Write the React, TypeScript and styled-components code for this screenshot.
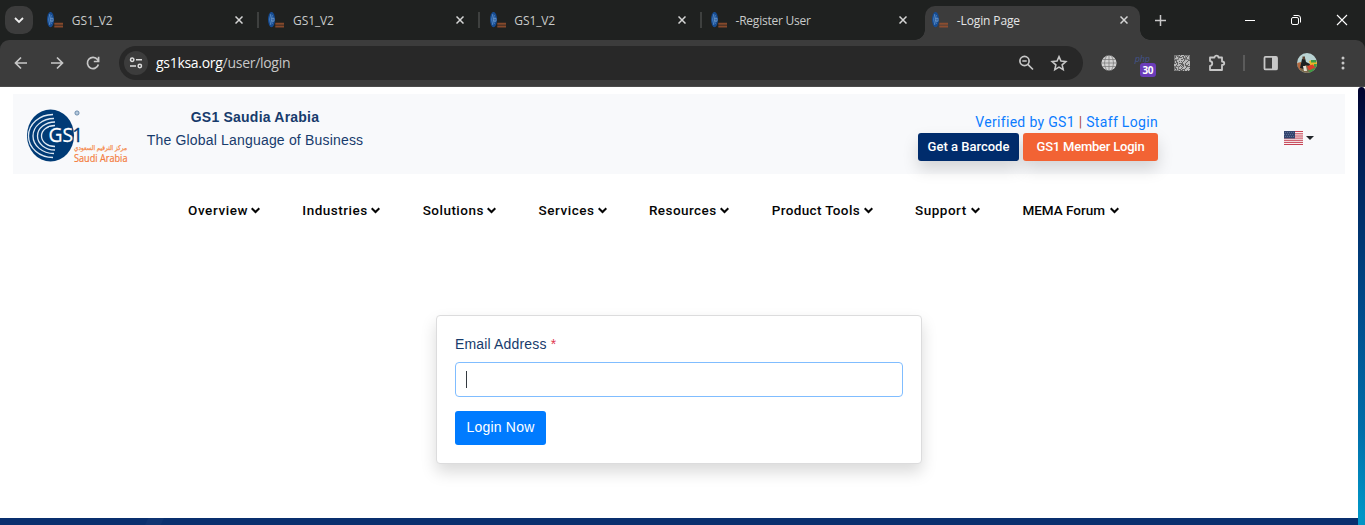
import React from "react";
import styled, { createGlobalStyle } from "styled-components";

const Global = createGlobalStyle`
  * { box-sizing: border-box; }
  html, body { margin: 0; padding: 0; overflow: hidden; background: #fff; }
  body { font-family: "Liberation Sans", Arial, sans-serif; }
  svg { display: block; flex: none; }
`;

const Screen = styled.div`
  width: 1365px;
  height: 525px;
  display: flex;
  flex-direction: column;
  overflow: hidden;
`;

const TabStrip = styled.div`
  height: 40px;
  flex: none;
  display: flex;
  background: #1f2120;
  padding: 6px 0 0 5px;
  font-family: "Open Sans", "Noto Sans", sans-serif;
`;

const TabSearch = styled.div`
  width: 28px;
  height: 28px;
  border-radius: 10px;
  background: #3c3c3c;
  display: flex;
  align-items: center;
  justify-content: center;
  margin-right: 7px;
`;

const Tab = styled.div<{ $active?: boolean }>`
  position: relative;
  width: 215px;
  height: 34px;
  margin-right: 6.25px;
  padding: 0 12px 6px 7px;
  display: flex;
  align-items: center;
  border-radius: 10px 10px 0 0;
  background: ${(p) => (p.$active ? "#3c3c3c" : "transparent")};
  color: ${(p) => (p.$active ? "#e6e6e6" : "#c9cbca")};
  &::before, &::after {
    content: "";
    display: ${(p) => (p.$active ? "block" : "none")};
    position: absolute;
    bottom: 0;
    width: 10px;
    height: 10px;
  }
  &::before {
    left: -10px;
    background: radial-gradient(circle at 0 0, transparent 9.5px, #3c3c3c 10px);
  }
  &::after {
    right: -10px;
    background: radial-gradient(circle at 100% 0, transparent 9.5px, #3c3c3c 10px);
  }
`;

const TabTitle = styled.span<{ $spacing: number }>`
  flex: 1;
  margin-left: 8.8px;
  padding-top: 1px;
  font-size: 12px;
  line-height: 16px;
  letter-spacing: ${(p) => p.$spacing}px;
  white-space: nowrap;
`;

const TabDivider = styled.span`
  position: absolute;
  right: -4px;
  top: 6px;
  width: 2px;
  height: 16px;
  background: #3e403f;
`;

const NewTab = styled.div`
  width: 28px;
  height: 28px;
  display: flex;
  align-items: center;
  justify-content: center;
`;

const WindowControls = styled.div`
  flex: 1;
  height: 28px;
  display: flex;
  justify-content: flex-end;
  align-items: center;
  gap: 34px;
  padding-right: 17px;
`;

const ToolbarBack = styled.div`
  height: 47px;
  flex: none;
  background: #1f2120;
`;

const Toolbar = styled.div`
  height: 47px;
  display: flex;
  align-items: center;
  padding: 0 14px 1px 13px;
  background: #3c3c3c;
  border-radius: 9px 9px 0 0;
  border-bottom: 1px solid #4b4b4b;
`;

const NavButtons = styled.div`
  display: flex;
  gap: 20px;
  width: 106px;
`;

const AddressBar = styled.div`
  width: 964px;
  height: 34px;
  border-radius: 17px;
  background: #282828;
  display: flex;
  align-items: center;
  padding: 0 15px 0 5px;
`;

const SiteInfo = styled.div`
  width: 24px;
  height: 24px;
  border-radius: 50%;
  background: #3c3c3c;
  display: flex;
  align-items: center;
  justify-content: center;
`;

const Url = styled.div`
  flex: 1;
  margin-left: 8px;
  padding-top: 1px;
  font: 14px/20px "Open Sans", "Noto Sans", sans-serif;
  letter-spacing: -0.29px;
  color: #c7c7c7;
  b { font-weight: 400; color: #fff; }
`;

const BarIcons = styled.div`
  display: flex;
  align-items: center;
  gap: 16px;
`;

const Extensions = styled.div`
  flex: 1;
  display: flex;
  align-items: center;
  justify-content: space-between;
  margin-left: 18px;
`;

const PhpIcon = styled.div`
  display: flex;
  flex-direction: column;
  width: 21px;
  height: 28px;
  padding-top: 5px;
  font: italic 9px/9px "Open Sans", sans-serif;
  letter-spacing: -0.3px;
  color: #43548c;
`;

const Count = styled.span`
  position: relative;
  align-self: flex-end;
  flex: none;
  width: 16px;
  height: 14px;
  border-radius: 3px;
  background: #6b3cba;
  color: #fff;
  font: 700 10px/14px "Open Sans", sans-serif;
  text-align: center;
`;

const ToolDivider = styled.span`
  width: 2px;
  height: 16px;
  background: #5b5b5b;
`;

const Page = styled.div`
  flex: 1;
  min-height: 0;
  display: flex;
  background: #fff;
`;

const Main = styled.main`
  width: 1358px;
  display: flex;
  flex-direction: column;
  align-items: center;
`;

const ScrollThumb = styled.div`
  width: 7px;
  border-radius: 4px 4px 0 0;
  background: linear-gradient(100deg, transparent 50%, rgba(0, 30, 80, 0.15)),
    linear-gradient(180deg, #02022e 0%, #00194f 12%, #004a8a 50%, #0074b0 78%, #00a8d8 98%);
`;

const Header = styled.header`
  align-self: flex-start;
  width: 1332px;
  height: 80px;
  margin: 7px 0 0 13px;
  padding-left: 13px;
  display: flex;
  align-items: flex-start;
  background: #f8f9fb;
`;

const Tagline = styled.div`
  width: 218px;
  margin: 12px 0 0 16px;
  text-align: center;
  color: #173b6c;
  font-size: 14px;
  line-height: 23px;
  white-space: nowrap;
  strong { display: block; letter-spacing: 0.22px; }
  span { letter-spacing: 0.18px; }
`;

const Actions = styled.div`
  width: 240px;
  margin: 18px 0 0 554px;
`;

const Links = styled.div`
  height: 21px;
  text-align: right;
  font: 14px/21px Roboto, sans-serif;
  letter-spacing: 0.32px;
  white-space: nowrap;
  color: #a84a4a;
  a { color: #0b7cff; }
`;

const ButtonRow = styled.div`
  display: flex;
  gap: 4px;
`;

const HeaderButton = styled.button<{ $color: string; $width: number; $spacing: number }>`
  width: ${(p) => p.$width}px;
  height: 28px;
  padding: 0;
  border: 0;
  border-radius: 3px;
  background: ${(p) => p.$color};
  color: #fff;
  font: 500 13px/28px Roboto, sans-serif;
  letter-spacing: ${(p) => p.$spacing}px;
  box-shadow: 0 8px 16px rgba(0, 0, 0, 0.15);
  white-space: nowrap;
`;

const Language = styled.div`
  display: flex;
  align-items: center;
  gap: 3px;
  margin: 37px 0 0 126px;
`;

const Caret = styled.span`
  border: 4px solid transparent;
  border-top-color: #212529;
  border-bottom: 0;
`;

const Menu = styled.nav`
  align-self: flex-start;
  display: flex;
  gap: 42.35px;
  margin: 26px 0 0 188px;
  height: 20px;
`;

const MenuItem = styled.a<{ $width: number; $spacing: number }>`
  width: ${(p) => p.$width}px;
  display: flex;
  align-items: center;
  justify-content: space-between;
  color: #050505;
  font: 500 13.5px/20px Roboto, sans-serif;
  letter-spacing: ${(p) => p.$spacing}px;
  white-space: nowrap;
`;

const Card = styled.form`
  width: 486px;
  height: 149px;
  margin-top: 95px;
  padding: 18px;
  border: 1px solid #dcdcdd;
  border-radius: 4px;
  background: #fff;
  box-shadow: 0 8px 16px rgba(0, 0, 0, 0.15);
`;

const Label = styled.label`
  display: block;
  height: 28px;
  font-size: 14px;
  line-height: 21px;
  letter-spacing: 0.16px;
  color: #173b6c;
  em { font-style: normal; color: #e03550; }
`;

const Field = styled.div`
  height: 35px;
  border: 1px solid #80bdff;
  border-radius: 4px;
  padding: 8px 10px;
`;

const TextCursor = styled.span`
  display: block;
  width: 1px;
  height: 17px;
  background: #343a40;
`;

const LoginButton = styled.button`
  display: block;
  width: 91px;
  height: 34px;
  margin-top: 14px;
  padding: 0 0 2px;
  border: 0;
  border-radius: 3px;
  background: #007bff;
  color: #fff;
  font: 14px/21px "Liberation Sans", Arial, sans-serif;
  letter-spacing: 0.2px;
`;

const Footer = styled.footer`
  width: 100%;
  height: 7px;
  margin-top: auto;
  background: linear-gradient(115deg, transparent 134px, #0f3472 135px, #0f3472 148px, transparent 149px), #092f6e;
`;

const Favicon = () => (
  <svg width="16" height="16" viewBox="0 0 16 16">
    <ellipse cx="3.5" cy="7.6" rx="3.5" ry="7.7" fill="#164b91" />
    <path d="M2.8 2Q.5 7.5 2.8 13M4.3 3Q2 7.5 4.3 12" stroke="#5d91c9" strokeWidth=".8" fill="none" />
    <path d="M4 6.2h2v3H4z" stroke="#98b9df" strokeWidth=".6" fill="none" />
    <path d="M7.3 11.8H16M7.3 14.5H16" stroke="#99512e" strokeWidth="1.9" opacity=".85" />
  </svg>
);

const Close = () => (
  <svg width="8" height="8" viewBox="0 0 8 8" stroke="#d5d5d5" strokeWidth="1.5">
    <path d="M.5.5l7 7M7.5.5l-7 7" />
  </svg>
);

const Arrow = ({ flip }: { flip?: boolean }) => (
  <svg width="16" height="16" viewBox="0 0 16 16" fill="none" stroke="#c7c7c7" strokeWidth="1.7">
    <path d={flip ? "M2 8h11.2M8 2.5L13.5 8 8 13.5" : "M14 8H2.8M8 2.5L2.5 8 8 13.5"} />
  </svg>
);

const Logo = () => (
  <svg width="104" height="80" viewBox="0 0 104 80" style={{ overflow: "visible" }}>
    <ellipse cx="24.5" cy="41.5" rx="23.5" ry="26" fill="#003b76" />
    <g fill="none" stroke="#dfe9f3" strokeWidth="1.3">
      <path d="M27 20.500A24.500 21.500 0 0 0 27 63.500" />
      <path d="M28 24.500A21 17.500 0 0 0 28 59.500" />
      <path d="M29 28A17.500 14 0 0 0 29 56" />
      <path d="M29 31.500A13.500 10.500 0 0 0 29 52.500" />
    </g>
    <path d="M23 33h23v16H23z" fill="#003b76" />
    <text x="22.5" y="48.3" fontFamily="Open Sans, sans-serif" fontSize="19.5" fill="#fff" textLength="24.5" lengthAdjust="spacingAndGlyphs" stroke="#fff" strokeWidth=".3">GS</text>
    <text x="46" y="48.3" fontFamily="Open Sans, sans-serif" fontSize="19.5" fill="#003b76" stroke="#003b76" strokeWidth=".3">1</text>
    <circle cx="51" cy="19" r="2.1" fill="#b6c9db" stroke="#5379a0" strokeWidth=".8" />
    <text x="101" y="56" direction="rtl" fontFamily="DejaVu Sans, sans-serif" fontSize="6.5" fill="#f58a4d" stroke="#f58a4d" strokeWidth=".25" textLength="53" lengthAdjust="spacingAndGlyphs">مركز الترقيم السعودي</text>
    <text x="48" y="68" fontFamily="Open Sans, sans-serif" fontSize="10" fill="#f47c3c" stroke="#f47c3c" strokeWidth=".2" textLength="53.5" lengthAdjust="spacingAndGlyphs">Saudi Arabia</text>
  </svg>
);

const Flag = () => (
  <svg width="19" height="14" viewBox="0 0 19 14">
    <path d="M0 0h19v14H0z" fill="#f7eff0" />
    <path d="M0 .5h19M0 2.8h19M0 5h19M0 7.1h19M0 9.3h19M0 11.4h19M0 13.5h19" stroke="#c54153" />
    <path d="M0 0h11v7.5H0z" fill="#34466f" />
    <path d="M1 1.5h10M0 3.5h10M1 5.5h10" stroke="#7f8db0" strokeWidth=".7" strokeDasharray=".8 1.2" />
  </svg>
);

const qrCells = Array.from({ length: 256 }, (_, i) => (i * i * 7 + i * 13 + (i >> 3) * 11) % 19 < 9);
const Qr = () => (
  <svg width="16" height="16" viewBox="0 0 16 16">
    <path d="M0 0h16v16H0z" fill="#b8b8b8" />
    {qrCells.map((on, i) => on && <rect key={i} x={i % 16} y={Math.floor(i / 16)} width="1" height="1" fill="#606060" />)}
    <path d="M.5.5h4v4h-4zM11.5.5h4v4h-4zM.5 11.5h4v4h-4z" fill="none" stroke="#777" />
  </svg>
);

const Avatar = () => (
  <svg width="20" height="20" viewBox="0 0 20 20">
    <clipPath id="round"><circle cx="10" cy="10" r="10" /></clipPath>
    <g clipPath="url(#round)">
      <path d="M0 0h20v20H0z" fill="#b9d3d3" />
      <path d="M0 11h20v9H0z" fill="#7d6a4c" />
      <path d="M0 10l4-1 2 5-4 4z" fill="#b5683f" />
      <path d="M5 6l3-1 1 4 4 2-1 2-4-1-1 4-4-1z" fill="#1d1f21" />
      <path d="M5.500 3.500h2.500v3H5.500z" fill="#5d4433" />
      <path d="M12 8l3-1 5 2v4l-6 1z" fill="#e9b52a" />
      <path d="M14 7h5v2.500h-5zM11 17l6-2 2 3-6 2zM17 11h3v3h-3z" fill="#3d9d45" />
      <path d="M10 13l6-1.500 2 3-6 3z" fill="#dc3f2a" />
      <path d="M6 13l3 0 1 5-3 0z" fill="#e5ded3" />
    </g>
  </svg>
);

const tabs = [
  { title: "GS1_V2", spacing: -0.1 },
  { title: "GS1_V2", spacing: -0.1 },
  { title: "GS1_V2", spacing: -0.1 },
  { title: "-Register User", spacing: -0.23 },
  { title: "-Login Page", spacing: -0.12 },
];

const menu: [string, number, number][] = [
  ["Overview", 72, 0.6],
  ["Industries", 78, 0.5],
  ["Solutions", 73.5, 0.48],
  ["Services", 68, 0.55],
  ["Resources", 80.5, 0.45],
  ["Product Tools", 101, 0.36],
  ["Support", 65, 0.5],
  ["MEMA Forum", 96.5, 0],
];

export default function App() {
  return (
    <Screen>
      <Global />
      <TabStrip>
        <TabSearch>
          <svg width="10" height="8" viewBox="0 0 10 8" fill="none" stroke="#eee" strokeWidth="1.8"><path d="M1 2l4 4 4-4" /></svg>
        </TabSearch>
        {tabs.map((t, i) => (
          <Tab key={i} $active={i === 4}>
            <Favicon />
            <TabTitle $spacing={t.spacing}>{t.title}</TabTitle>
            <Close />
            {i < 3 && <TabDivider />}
          </Tab>
        ))}
        <NewTab>
          <svg width="11" height="11" viewBox="0 0 11 11" stroke="#c8c8c8" strokeWidth="1.5"><path d="M5.5 0v11M0 5.5h11" /></svg>
        </NewTab>
        <WindowControls>
          <svg width="12" height="12" viewBox="0 0 12 12" stroke="#fff"><path d="M1 6.5h10" /></svg>
          <svg width="12" height="12" viewBox="0 0 12 12" stroke="#fff" fill="none"><rect x="1.5" y="3.5" width="7" height="7" rx="1.5" /><path d="M3.5 1.5H8a2.5 2.5 0 0 1 2.5 2.5v4.5" /></svg>
          <svg width="12" height="12" viewBox="0 0 12 12" stroke="#fff" strokeWidth="1.1"><path d="M1 1l10 10M11 1L1 11" /></svg>
        </WindowControls>
      </TabStrip>
      <ToolbarBack>
        <Toolbar>
          <NavButtons>
            <Arrow />
            <Arrow flip />
            <svg width="16" height="16" viewBox="0 0 16 16" fill="none" stroke="#c7c7c7" strokeWidth="1.7">
              <path d="M13.4 9.5A5.6 5.6 0 1 1 12.5 4.6L13.5 6M13.6 1.7v4.8H8.8" />
            </svg>
          </NavButtons>
          <AddressBar>
            <SiteInfo>
              <svg width="14" height="14" viewBox="0 0 14 14" fill="none" stroke="#ddd" strokeWidth="1.5">
                <circle cx="3.2" cy="3.8" r="1.7" /><path d="M7 3.8h6M1 10h6" /><circle cx="10.8" cy="10" r="1.7" />
              </svg>
            </SiteInfo>
            <Url><b>gs1ksa.org</b>/user/login</Url>
            <BarIcons>
              <svg width="16" height="16" viewBox="0 0 16 16" fill="none" stroke="#c7c7c7" strokeWidth="1.7">
                <circle cx="6.5" cy="6" r="4.6" /><path d="M9.8 9.3L15 14.5M4.3 6h4.4" />
              </svg>
              <svg width="18" height="18" viewBox="0 0 24 24" fill="none" stroke="#c7c7c7" strokeWidth="2.1">
                <path d="M12 3.5l2.6 6 6.5.6-4.9 4.3 1.4 6.4-5.6-3.4-5.6 3.4 1.4-6.4-4.9-4.3 6.5-.6z" />
              </svg>
            </BarIcons>
          </AddressBar>
          <Extensions>
            <svg width="16" height="16" viewBox="0 0 16 16">
              <circle cx="8" cy="8" r="7.6" fill="#d2d2d2" />
              <path d="M8 0v16M1 4.5h14M0 8h16M1 11.5h14M6 0q-5 8 0 16M10 0q5 8 0 16" fill="none" stroke="#777" strokeWidth=".7" />
            </svg>
            <PhpIcon>php<Count>30</Count></PhpIcon>
            <Qr />
            <svg width="18" height="18" viewBox="0 0 18 18" fill="none" stroke="#c7c7c7" strokeWidth="1.8" strokeLinejoin="round">
              <path d="M2 3.5h4.5C6.5 1 10.5 1 10.5 3.5H14V7.5C17 7.5 17 11 14 11V16H2V12C5 11.500 5 7.500 2 7z" />
            </svg>
            <ToolDivider />
            <svg width="16" height="16" viewBox="0 0 16 16"><rect x="1.500" y="1.900" width="12.500" height="12.500" rx="1" fill="none" stroke="#c7c7c7" strokeWidth="1.800" /><path d="M9 2h5v12H9z" fill="#c7c7c7" /></svg>
            <Avatar />
            <svg width="16" height="16" viewBox="0 0 16 16" fill="#c7c7c7"><circle cx="8" cy="3" r="1.500" /><circle cx="8" cy="8" r="1.500" /><circle cx="8" cy="13" r="1.500" /></svg>
          </Extensions>
        </Toolbar>
      </ToolbarBack>
      <Page>
        <Main>
          <Header>
            <Logo />
            <Tagline><strong>GS1 Saudia Arabia</strong><span>The Global Language of Business</span></Tagline>
            <Actions>
              <Links><a>Verified by GS1</a> | <a>Staff Login</a></Links>
              <ButtonRow>
                <HeaderButton type="button" $color="#002c6c" $width={101} $spacing={0}>Get a Barcode</HeaderButton>
                <HeaderButton type="button" $color="#f26334" $width={135} $spacing={-0.22}>GS1 Member Login</HeaderButton>
              </ButtonRow>
            </Actions>
            <Language><Flag /><Caret /></Language>
          </Header>
          <Menu>
            {menu.map(([name, width, spacing]) => (
              <MenuItem key={name} $width={width} $spacing={spacing}>
                {name}
                <svg width="9" height="7" viewBox="0 0 9 7" fill="none" stroke="#050505" strokeWidth="2"><path d="M.7 1.200L4.500 5l3.800-3.800" /></svg>
              </MenuItem>
            ))}
          </Menu>
          <Card>
            <Label>Email Address <em>*</em></Label>
            <Field><TextCursor /></Field>
            <LoginButton type="button">Login Now</LoginButton>
          </Card>
          <Footer />
        </Main>
        <ScrollThumb />
      </Page>
    </Screen>
  );
}
